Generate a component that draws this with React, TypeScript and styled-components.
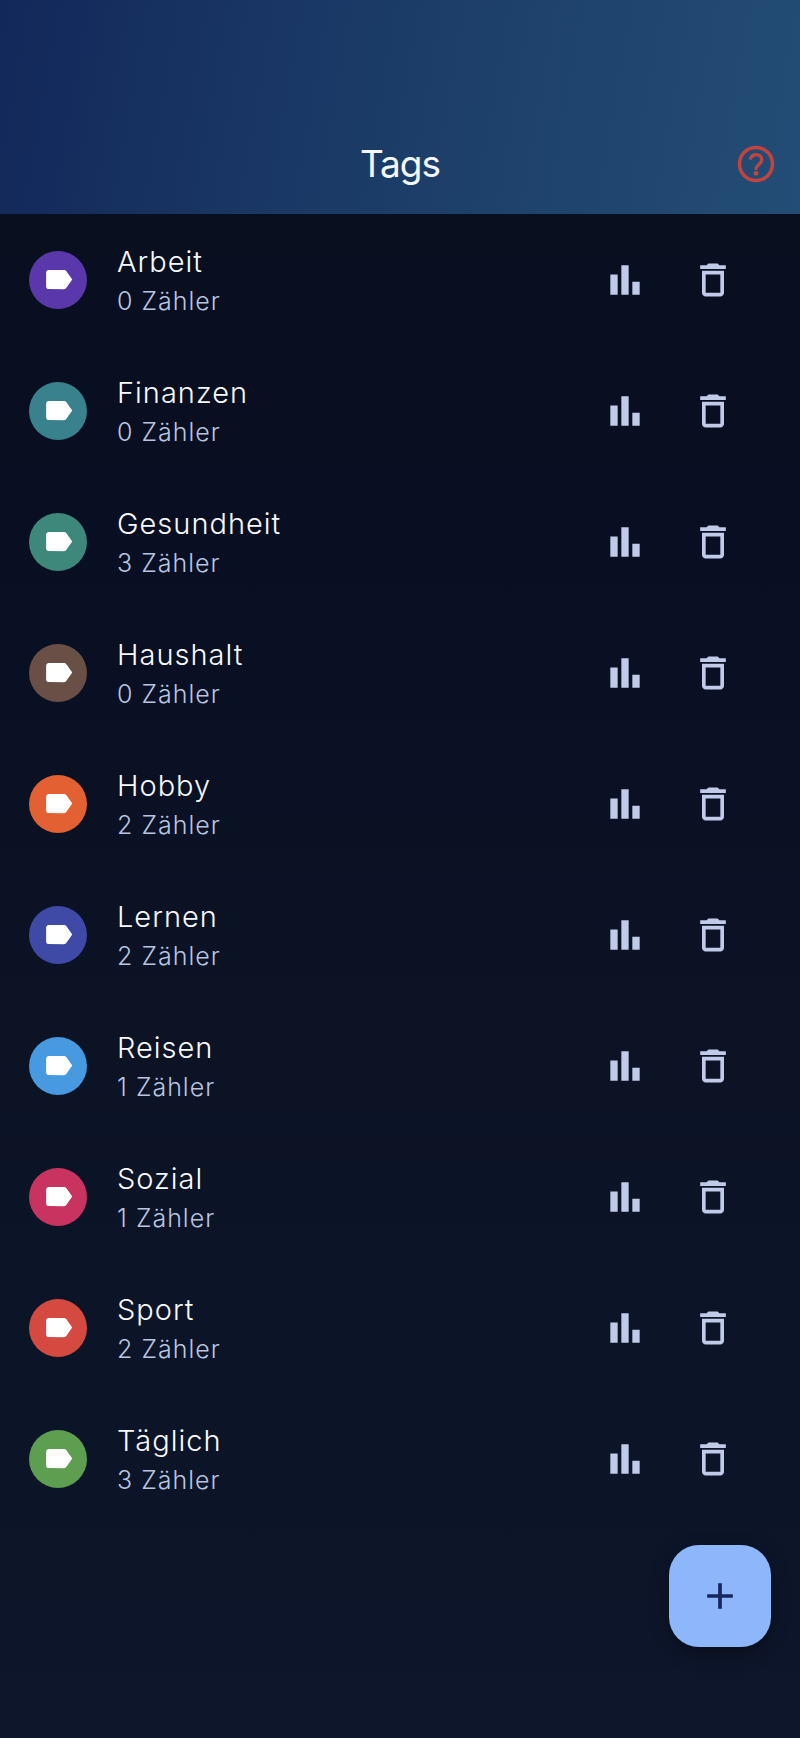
import React from "react";
import styled, { createGlobalStyle } from "styled-components";

const GlobalStyle = createGlobalStyle`
  * { box-sizing: border-box; }
  body {
    margin: 0;
    background: #0d162a;
    font-family: Inter, Roboto, "Liberation Sans", sans-serif;
  }
`;

const Page = styled.div`
  min-height: 100vh;
  background: linear-gradient(180deg, #080f1d 0%, #090f22 30%, #0b1325 60%, #0d162a 100%);
`;

const Header = styled.header`
  display: grid;
  grid-template-columns: 88px 1fr 88px;
  align-items: center;
  padding-top: 114px;
  background: linear-gradient(100deg, #12285a 0%, #1a3865 38%, #1e426b 65%, #234d76 100%);
`;

const Title = styled.h1`
  grid-column: 2;
  margin: 0;
  color: #f4f8ff;
  font-size: 37px;
  line-height: 100px;
  font-weight: 400;
  letter-spacing: -1px;
  text-align: center;
`;

const IconButton = styled.button<{ $color?: string }>`
  display: flex;
  align-items: center;
  justify-content: center;
  width: 88px;
  height: 88px;
  padding: 0;
  border: 0;
  background: none;
  color: ${(p) => p.$color ?? "#bfcbe8"};
  cursor: pointer;
`;

const Icon = styled.svg<{ $size: number }>`
  display: block;
  width: ${(p) => p.$size}px;
  height: ${(p) => p.$size}px;
  fill: currentColor;
`;

const List = styled.ul`
  margin: 0;
  padding: 0 0 214px;
  list-style: none;
`;

const Row = styled.li`
  display: flex;
  align-items: center;
  height: 131px;
  padding: 0 43px 0 29px;
`;

const Avatar = styled.span<{ $color: string }>`
  display: flex;
  flex: none;
  align-items: center;
  justify-content: center;
  width: 58px;
  height: 58px;
  margin-right: 30px;
  border-radius: 50%;
  background: ${(p) => p.$color};
  color: #ffffff;
`;

const Texts = styled.div`
  flex: 1;
  min-width: 0;
  padding-top: 2px;
`;

const Name = styled.div`
  color: #f8faff;
  font-size: 29px;
  font-weight: 300;
  line-height: 40px;
  letter-spacing: 1px;
`;

const Count = styled.div`
  color: #b9c5e0;
  font-size: 25px;
  font-weight: 300;
  line-height: 38px;
  letter-spacing: 1px;
`;

const Fab = styled.button`
  position: fixed;
  right: 29px;
  bottom: 91px;
  display: flex;
  align-items: center;
  justify-content: center;
  width: 102px;
  height: 102px;
  padding: 0;
  border: 0;
  border-radius: 30px;
  background: #8db6fb;
  color: #14265c;
  box-shadow: 0 6px 18px rgba(0, 0, 0, 0.35);
  cursor: pointer;
`;

const paths = {
  label:
    "M17.63 5.84C17.27 5.33 16.67 5 16 5L5 5.01C3.9 5.01 3 5.9 3 7v10c0 1.1.9 1.99 2 1.99L16 19c.67 0 1.27-.33 1.63-.84L22 12l-4.37-6.16z",
  chart: "M4 9h4v11H4zM16 13h4v7h-4zM10 4h4v16h-4z",
  trash:
    "M6 19c0 1.1.9 2 2 2h8c1.1 0 2-.9 2-2V7H6v12zM8 9h8v10H8V9zm7.5-5l-1-1h-5l-1 1H5v2h14V4h-3.5z",
  add: "M19 13h-6v6h-2v-6H5v-2h6V5h2v6h6v2z",
};

const Glyph = ({ name, size = 44 }: { name: keyof typeof paths; size?: number }) => (
  <Icon $size={size} viewBox="0 0 24 24" aria-hidden="true">
    <path d={paths[name]} />
  </Icon>
);

const HelpGlyph = () => (
  <Icon $size={44} viewBox="0 0 24 24" aria-hidden="true">
    <g fill="none" stroke="currentColor" strokeLinecap="round">
      <circle cx="12" cy="12" r="9" strokeWidth="1.9" />
      <path
        d="M9 8.9C9.5 7.6 10.6 6.9 12 6.9c1.8 0 3.1 1.1 3.1 2.8 0 1.2-.7 1.9-1.6 2.7-.9.8-1.5 1.2-1.5 2.1"
        strokeWidth="1.8"
      />
    </g>
    <circle cx="12" cy="17.1" r="1.3" />
  </Icon>
);

const tags = [
  { name: "Arbeit", count: 0, color: "#5a38ab" },
  { name: "Finanzen", count: 0, color: "#39818d" },
  { name: "Gesundheit", count: 3, color: "#3d877b" },
  { name: "Haushalt", count: 0, color: "#6a4f46" },
  { name: "Hobby", count: 2, color: "#e36033" },
  { name: "Lernen", count: 2, color: "#3f4aa6" },
  { name: "Reisen", count: 1, color: "#4799e0" },
  { name: "Sozial", count: 1, color: "#c8335f" },
  { name: "Sport", count: 2, color: "#d54a40" },
  { name: "Täglich", count: 3, color: "#5d9e51" },
];

export default function App() {
  return (
    <Page>
      <GlobalStyle />
      <Header>
        <Title>Tags</Title>
        <IconButton $color="#c4433e" aria-label="Hilfe">
          <HelpGlyph />
        </IconButton>
      </Header>
      <main>
        <List>
          {tags.map((tag) => (
            <Row key={tag.name}>
              <Avatar $color={tag.color}>
                <Glyph name="label" size={33} />
              </Avatar>
              <Texts>
                <Name>{tag.name}</Name>
                <Count>{tag.count} Zähler</Count>
              </Texts>
              <IconButton aria-label={`Statistik ${tag.name}`}>
                <Glyph name="chart" />
              </IconButton>
              <IconButton aria-label={`${tag.name} löschen`}>
                <Glyph name="trash" />
              </IconButton>
            </Row>
          ))}
        </List>
      </main>
      <Fab aria-label="Tag hinzufügen">
        <Glyph name="add" />
      </Fab>
    </Page>
  );
}
